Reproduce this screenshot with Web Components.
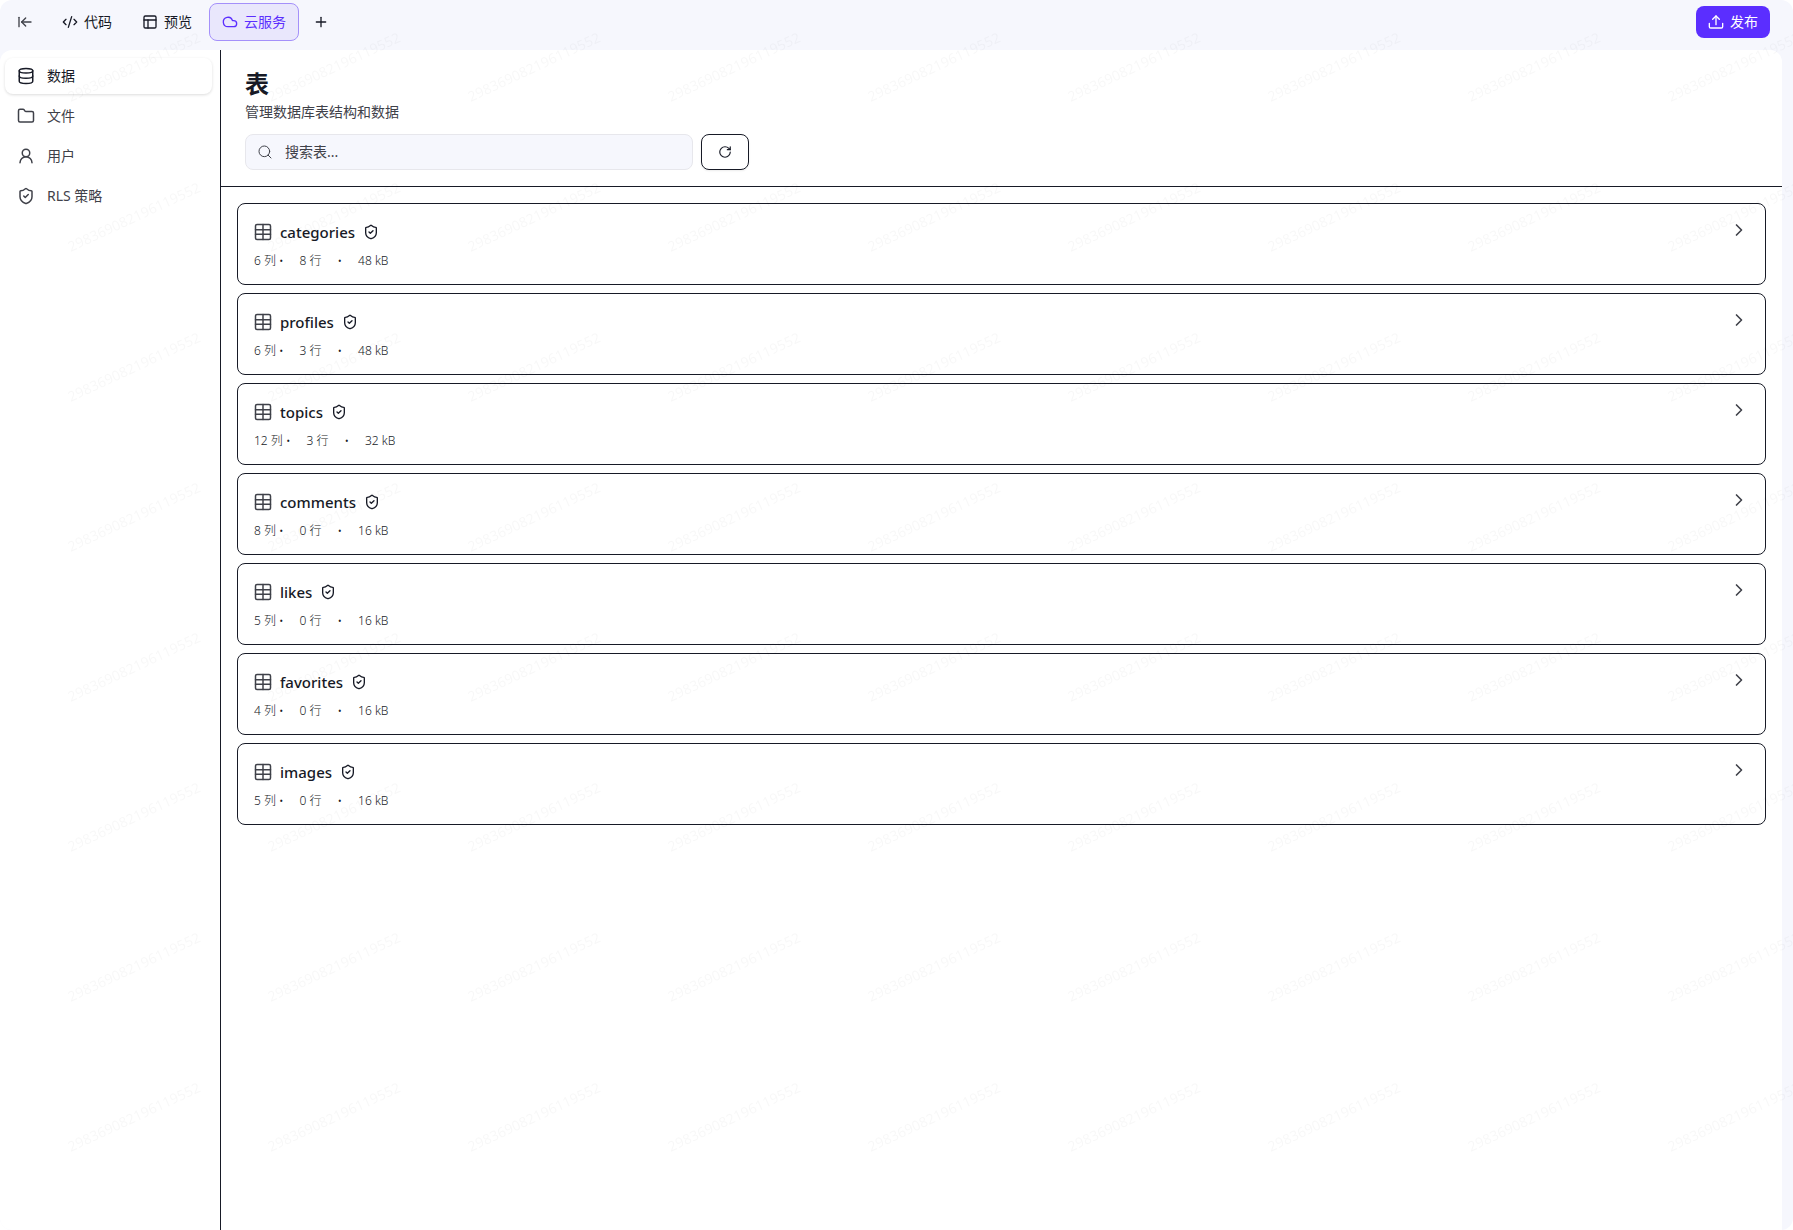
<!DOCTYPE html>
<html lang="zh-CN">
<head>
<meta charset="UTF-8">
<meta name="viewport" content="width=device-width, initial-scale=1">
<title>云服务</title>
<style>
    :root {
        --shell: #f6f7fd;
        --surface: #ffffff;
        --ink: #171a26;
        --text: #3f4149;
        --line: #171a26;
        --soft-line: #e7e7ec;
        --primary: #5b2eff;
        --primary-soft: #e9e7fc;
        --primary-line: #a490fa;
    }
    body {
        margin: 0;
        background: var(--surface);
        color: var(--ink);
        font-family: "Noto Sans", "Noto Sans CJK SC", sans-serif;
        font-size: 14px;
        line-height: 20px;
    }
</style>
</head>
<body>
<app-shell>
    <top-bar slot="header">
        <tool-button icon="collapse" label="收起" wide></tool-button>
        <tab-button icon="code">代码</tab-button>
        <tab-button icon="layout">预览</tab-button>
        <tab-button icon="cloud" active>云服务</tab-button>
        <tool-button icon="plus" label="新建标签"></tool-button>
        <publish-button slot="end">发布</publish-button>
    </top-bar>
    <side-nav slot="nav">
        <nav-item icon="database" active>数据</nav-item>
        <nav-item icon="folder">文件</nav-item>
        <nav-item icon="user">用户</nav-item>
        <nav-item icon="shield">RLS 策略</nav-item>
    </side-nav>
    <page-header>
        <span slot="title">表</span>
        <span slot="description">管理数据库表结构和数据</span>
    </page-header>
    <table-list>
        <table-card name="categories" columns="6" rows="8" size="48 kB"></table-card>
        <table-card name="profiles" columns="6" rows="3" size="48 kB"></table-card>
        <table-card name="topics" columns="12" rows="3" size="32 kB"></table-card>
        <table-card name="comments" columns="8" rows="0" size="16 kB"></table-card>
        <table-card name="likes" columns="5" rows="0" size="16 kB"></table-card>
        <table-card name="favorites" columns="4" rows="0" size="16 kB"></table-card>
        <table-card name="images" columns="5" rows="0" size="16 kB"></table-card>
    </table-list>
</app-shell>
<water-mark text="298369082196119552"></water-mark>

<script>
const ICONS = {
    collapse: '<path d="M3 19V5"/><path d="m13 6-6 6 6 6"/><path d="M7 12h14"/>',
    code: '<path d="m18 16 4-4-4-4"/><path d="m6 8-4 4 4 4"/><path d="m14.5 4-5 16"/>',
    layout: '<rect x="3" y="3" width="18" height="18" rx="2"/><path d="M3 9h18"/><path d="M9 21V9"/>',
    cloud: '<path d="M17.5 19H9a7 7 0 1 1 6.71-9h1.79a4.5 4.5 0 1 1 0 9Z"/>',
    plus: '<path d="M5 12h14"/><path d="M12 5v14"/>',
    upload: '<path d="M12 16V3"/><path d="m7 8 5-5 5 5"/><path d="M2 14v5a2 2 0 0 0 2 2h16a2 2 0 0 0 2-2v-5"/>',
    database: '<ellipse cx="12" cy="5" rx="9" ry="3"/><path d="M3 5v14a9 3 0 0 0 18 0V5"/><path d="M3 12a9 3 0 0 0 18 0"/>',
    folder: '<path d="M20 20a2 2 0 0 0 2-2V8a2 2 0 0 0-2-2h-7.9a2 2 0 0 1-1.69-.9L9.6 3.9A2 2 0 0 0 7.93 3H4a2 2 0 0 0-2 2v13a2 2 0 0 0 2 2Z"/>',
    user: '<circle cx="12" cy="8" r="5"/><path d="M20 21a8 8 0 0 0-16 0"/>',
    shield: '<path d="M20 13c0 5-3.5 7.5-7.66 8.95a1 1 0 0 1-.67-.01C7.5 20.5 4 18 4 13V6a1 1 0 0 1 1-1c2 0 4.5-1.2 6.24-2.72a1.17 1.17 0 0 1 1.52 0C14.51 3.81 17 5 19 5a1 1 0 0 1 1 1z"/><path d="m9 12 2 2 4-4"/>',
    search: '<circle cx="11" cy="11" r="8"/><path d="m21 21-4.3-4.3"/>',
    refresh: '<path d="M21 12a9 9 0 1 1-9-9c2.52 0 4.93 1 6.74 2.74L21 8"/><path d="M21 3v5h-5"/>',
    table: '<rect x="2" y="2" width="20" height="20" rx="2"/><path d="M12 2v20"/><path d="M2 9h20"/><path d="M2 15h20"/>',
    chevron: '<path d="m9 18 6-6-6-6"/>'
};

const icon = (name, size = 16, stroke = 2) =>
    `<svg width="${size}" height="${size}" viewBox="0 0 24 24" fill="none" stroke="currentColor" stroke-width="${stroke}" stroke-linecap="round" stroke-linejoin="round" aria-hidden="true">${ICONS[name]}</svg>`;

// shared by every element that draws a control
const BASE = `
    * { box-sizing: border-box; }
    svg { display: block; flex: none; }
    button, input { font: inherit; color: inherit; margin: 0; }
    button { cursor: pointer; }
    a { color: inherit; text-decoration: none; }
`;

class BaseElement extends HTMLElement {
    connectedCallback() {
        if (this.shadowRoot) return;
        this.attachShadow({ mode: 'open' });
        this.shadowRoot.innerHTML = `<style>${BASE}</style>${this.render()}`;
    }
}

class AppShell extends BaseElement {
    render() {
        return `
            <style>
                :host {
                    display: flex;
                    flex-direction: column;
                    min-height: 100vh;
                    background: var(--shell);
                    border-radius: 12px;
                    overflow: hidden;
                }
                .body {
                    flex: 1;
                    display: grid;
                    grid-template-columns: 221px minmax(0, 1fr);
                    margin-right: 11px;
                    background: var(--surface);
                    border-radius: 12px 12px 0 0;
                }
                main { border-left: 1px solid var(--line); margin-left: -1px; }
            </style>
            <slot name="header"></slot>
            <div class="body">
                <slot name="nav"></slot>
                <main><slot></slot></main>
            </div>
        `;
    }
}

class TopBar extends BaseElement {
    render() {
        return `
            <style>
                :host { display: block; }
                header {
                    display: flex;
                    align-items: center;
                    justify-content: space-between;
                    height: 50px;
                    padding: 0 23px 6px 5px;
                }
                .tabs { display: flex; align-items: center; gap: 4px; }
            </style>
            <header>
                <div class="tabs"><slot></slot></div>
                <slot name="end"></slot>
            </header>
        `;
    }
}

class ToolButton extends BaseElement {
    render() {
        return `
            <style>
                :host { display: block; }
                button {
                    display: flex;
                    align-items: center;
                    justify-content: center;
                    width: 36px;
                    height: 36px;
                    padding: 0;
                    border: 0;
                    border-radius: 8px;
                    background: none;
                    color: var(--ink);
                }
                :host([wide]) button { width: 40px; color: var(--text); }
            </style>
            <button type="button" aria-label="${this.getAttribute('label')}">${icon(this.getAttribute('icon'))}</button>
        `;
    }
}

class TabButton extends BaseElement {
    render() {
        return `
            <style>
                :host { display: block; }
                button {
                    display: flex;
                    align-items: center;
                    gap: 6px;
                    height: 38px;
                    padding: 0 12px;
                    border: 1px solid transparent;
                    border-radius: 8px;
                    background: none;
                    color: var(--ink);
                }
                :host([active]) button {
                    background: var(--primary-soft);
                    border-color: var(--primary-line);
                    color: var(--primary);
                }
            </style>
            <button type="button">${icon(this.getAttribute('icon'))}<slot></slot></button>
        `;
    }
}

class PublishButton extends BaseElement {
    render() {
        return `
            <style>
                :host { display: block; }
                button {
                    display: flex;
                    align-items: center;
                    gap: 6px;
                    height: 32px;
                    padding: 0 12px;
                    border: 0;
                    border-radius: 8px;
                    background: var(--primary);
                    color: #fff;
                }
            </style>
            <button type="button">${icon('upload')}<slot></slot></button>
        `;
    }
}

class SideNav extends BaseElement {
    render() {
        return `
            <style>
                :host { display: block; }
                nav {
                    display: flex;
                    flex-direction: column;
                    gap: 4px;
                    padding: 8px 9px 8px 5px;
                }
            </style>
            <nav><slot></slot></nav>
        `;
    }
}

class NavItem extends BaseElement {
    render() {
        return `
            <style>
                :host { display: block; }
                a {
                    display: flex;
                    align-items: center;
                    gap: 12px;
                    height: 36px;
                    padding: 0 12px;
                    border-radius: 8px;
                    color: var(--text);
                }
                :host([active]) a {
                    background: var(--surface);
                    color: var(--ink);
                    box-shadow: 0 1px 3px rgba(0, 0, 0, 0.14);
                }
            </style>
            <a href="#">${icon(this.getAttribute('icon'), 18)}<span><slot></slot></span></a>
        `;
    }
}

class PageHeader extends BaseElement {
    render() {
        return `
            <style>
                :host {
                    display: block;
                    padding: 16px 24px;
                    border-bottom: 1px solid var(--line);
                }
                h1 { margin: 0; font-size: 24px; line-height: 36px; font-weight: 700; }
                p { margin: 0 0 12px; color: var(--text); }
                .tools { display: flex; gap: 8px; }
                .search {
                    display: flex;
                    align-items: center;
                    gap: 12px;
                    width: 448px;
                    height: 36px;
                    padding: 0 11px;
                    border: 1px solid var(--soft-line);
                    border-radius: 8px;
                    background: var(--shell);
                    color: var(--text);
                }
                input {
                    flex: 1;
                    min-width: 0;
                    padding: 0;
                    border: 0;
                    outline: 0;
                    background: none;
                }
                input::placeholder { color: var(--text); opacity: 1; }
                button {
                    display: flex;
                    align-items: center;
                    justify-content: center;
                    width: 48px;
                    height: 36px;
                    padding: 0;
                    border: 1px solid var(--line);
                    border-radius: 8px;
                    background: var(--surface);
                    box-shadow: 0 1px 2px rgba(0, 0, 0, 0.08);
                }
            </style>
            <h1><slot name="title"></slot></h1>
            <p><slot name="description"></slot></p>
            <div class="tools">
                <label class="search">
                    ${icon('search', 16, 1.5)}
                    <input type="text" placeholder="搜索表..." aria-label="搜索表">
                </label>
                <button type="button" aria-label="刷新">${icon('refresh', 14)}</button>
            </div>
        `;
    }
}

class TableList extends BaseElement {
    render() {
        return `
            <style>
                :host {
                    display: flex;
                    flex-direction: column;
                    gap: 8px;
                    padding: 16px;
                }
            </style>
            <slot></slot>
        `;
    }
}

class TableCard extends BaseElement {
    render() {
        const get = (key) => this.getAttribute(key);
        return `
            <style>
                :host { display: block; }
                .card {
                    display: flex;
                    justify-content: space-between;
                    padding: 16px;
                    border: 1px solid var(--line);
                    border-radius: 8px;
                    background: var(--surface);
                }
                .name { display: flex; align-items: center; gap: 8px; }
                .name > svg:first-child, .go { color: var(--text); }
                h3 { margin: 0; font-size: 15px; line-height: 24px; font-weight: 500; }
                .meta {
                    display: flex;
                    gap: 16px;
                    margin-top: 10px;
                    font-size: 12px;
                    line-height: 14px;
                    font-weight: 300;
                }
            </style>
            <a class="card" href="#">
                <div>
                    <div class="name">${icon('table', 18)}<h3>${get('name')}</h3>${icon('shield')}</div>
                    <div class="meta">
                        <span>${get('columns')} 列 •</span>
                        <span>${get('rows')} 行</span>
                        <span>•</span>
                        <span>${get('size')}</span>
                    </div>
                </div>
                <span class="go">${icon('chevron', 20)}</span>
            </a>
        `;
    }
}

// faint account number tiled over the whole window
class WaterMark extends BaseElement {
    render() {
        const cols = Math.ceil(window.innerWidth / 200);
        const rows = Math.round(window.innerHeight / 150);
        const cell = `<span>${this.getAttribute('text')}</span>`;
        return `
            <style>
                :host {
                    position: fixed;
                    inset: 0;
                    overflow: hidden;
                    pointer-events: none;
                    color: rgba(0, 0, 0, 0.03);
                }
                .grid {
                    display: grid;
                    grid-template-columns: repeat(${cols}, 200px);
                    grid-auto-rows: 150px;
                    margin: -8px 0 0 34px;
                }
                span { place-self: center; transform: rotate(-25deg); }
            </style>
            <div class="grid" aria-hidden="true">${cell.repeat(cols * rows)}</div>
        `;
    }
}

customElements.define('app-shell', AppShell);
customElements.define('top-bar', TopBar);
customElements.define('tool-button', ToolButton);
customElements.define('tab-button', TabButton);
customElements.define('publish-button', PublishButton);
customElements.define('side-nav', SideNav);
customElements.define('nav-item', NavItem);
customElements.define('page-header', PageHeader);
customElements.define('table-list', TableList);
customElements.define('table-card', TableCard);
customElements.define('water-mark', WaterMark);
</script>
</body>
</html>
